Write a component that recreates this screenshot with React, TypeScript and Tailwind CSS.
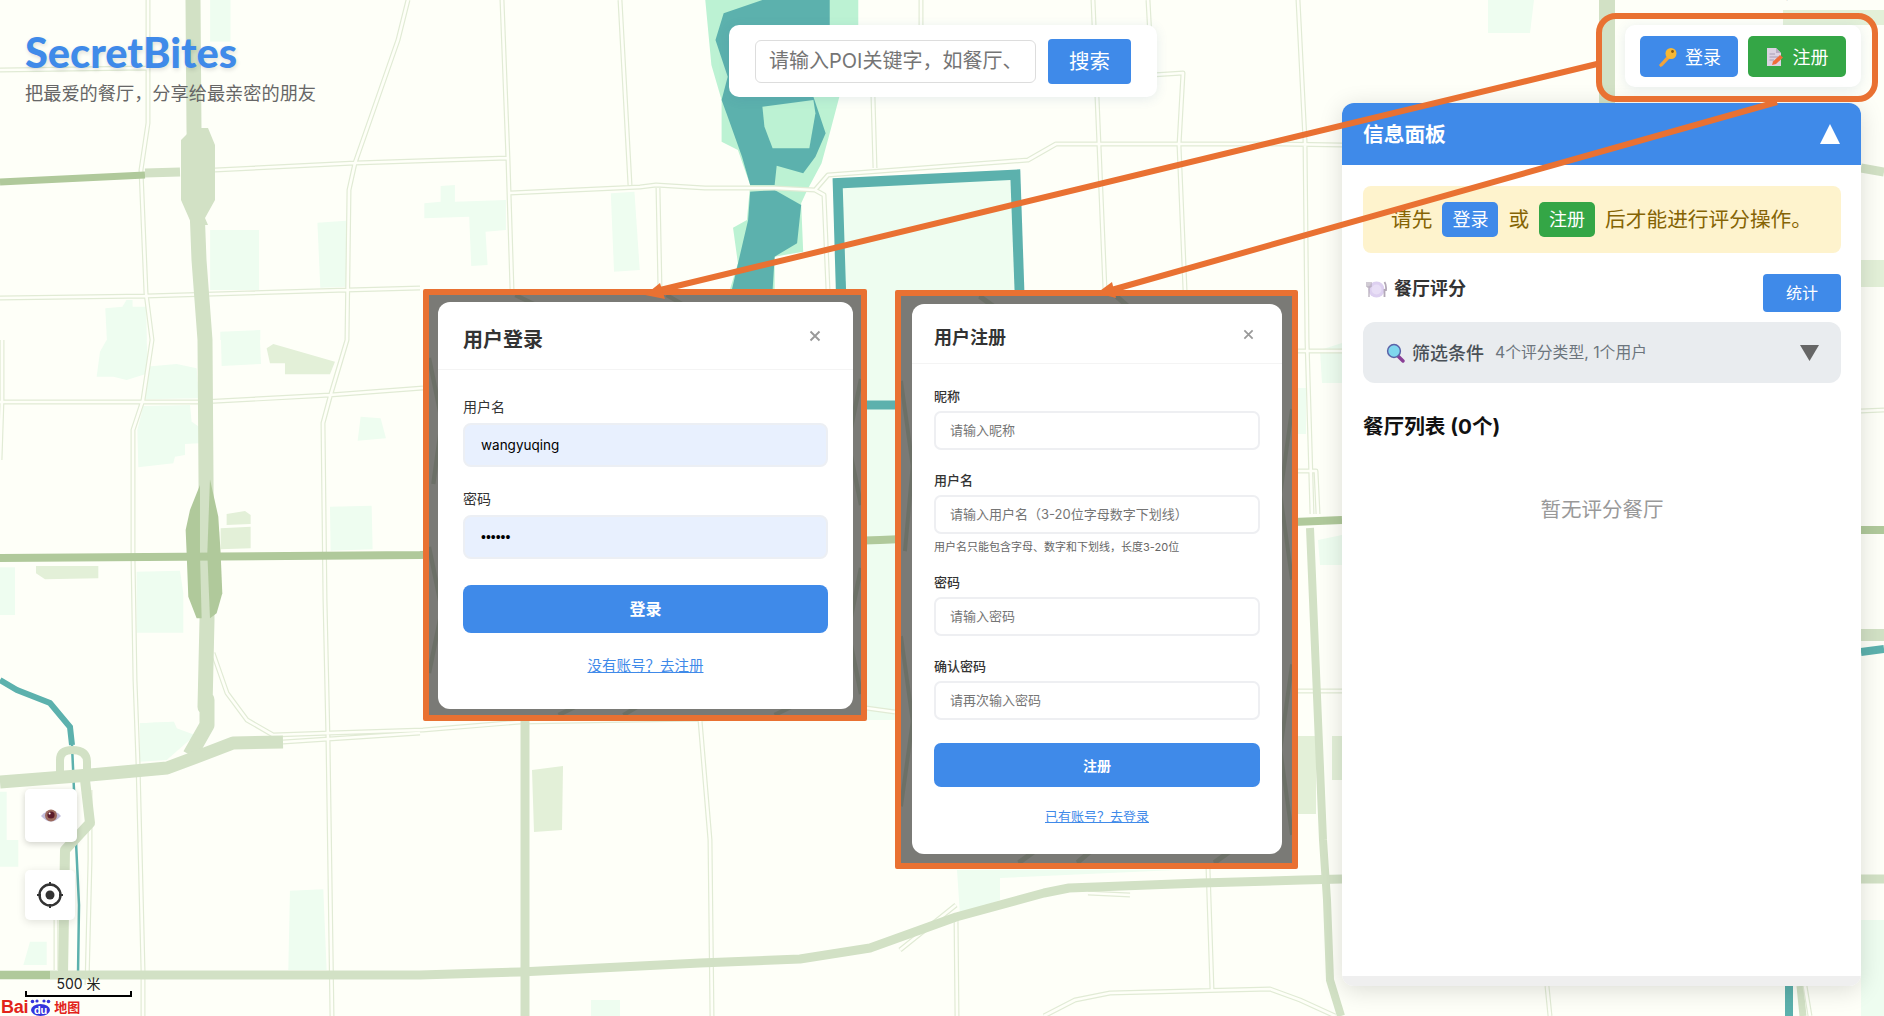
import type { ReactNode } from 'react';

const minorRoads = [
  'M148 0L148 123L141 170L146 293L152 340L143 400L133 430L133 557L135 680L138 763L143 970L143 1016',
  'M408 0L398 40L355 163L349 190L347 340L330 397L323 423L325 600L328 740L332 1016',
  'M502 0L508 160L512 290L511 340',
  'M620 0L630 185',
  'M0 70L147 68',
  'M0 298L146 296L347 290L420 288',
  'M0 402L133 402L200 402L330 395L423 388',
  'M215 170L355 163L507 158',
  'M510 193L640 187L656 185L705 188L775 188L815 190L824 195L828 290',
  'M815 190L828 175L1028 160L1056 144L1280 144L1342 145',
  'M658 188L660 290',
  'M873 97L875 168',
  'M921 0L921 25',
  'M1093 0L1099 145L1105 290',
  'M1148 0L1152 75L1183 73L1179 145L1185 290',
  'M1298 0L1305 140L1307 340L1312 514',
  'M1298 351L1342 351',
  'M1298 471L1316 471L1318 514',
  'M1298 691L1342 691',
  'M1861 411L1884 410',
  'M2 340L2 400L0 460',
  'M213 653L227 693L247 720L273 735L330 733L423 730L520 722L700 719L866 712',
  'M283 742L420 733',
  'M700 720L710 840L712 1016',
  'M866 708L895 712',
  'M956 915L957 1016',
  'M1208 868L1212 990',
  'M1044 1016L1075 1000L1110 993L1270 989L1300 1000L1335 1016',
  'M1547 986L1550 1016',
  'M1805 986L1810 1016',
  'M90 790L90 860L87 985',
  'M56 970L56 900L70 890',
  'M900 950L956 905',
  'M1088 893L1130 895',
].join(' ');

function MapBackdrop() {
  return (
    <svg className="absolute inset-0" width="1884" height="1016" viewBox="0 0 1884 1016">
      <rect width="1884" height="1016" fill="#fefff8" />

      {/* parks, pale */}
      <g fill="#eefdf0">
        <g transform="scale(0.408 0.3333)">
          <path d="M515 0H565V125H515Z" />
          <path d="M515 690H635V870H515Z" />
          <path d="M778 668L848 662L850 860L785 863Z" />
          <path d="M1040 610L1080 605V558L1115 555V605L1240 600V690L1190 695L1195 795L1155 798L1150 650L1040 655Z" />
          <path d="M1497 580L1555 575L1568 810L1505 815Z" />
          <path d="M258 925L300 920L310 900H325V920L358 920L360 1020H262Z" />
          <path d="M540 995L638 990V1020H540Z" />
        </g>
        <g transform="translate(0 340) scale(0.3333)">
          <path d="M300 35L320 0H440L445 100L380 120L340 110H290Z" />
          <path d="M437 80L530 72L590 85L597 175L435 178Z" />
          <path d="M430 198L570 195L575 245L597 260V310L555 312V345L525 350L520 370L415 382L412 270Z" />
          <path d="M663 0H780L783 72L665 78Z" />
          <path d="M410 695L540 692L550 760V878H410Z" />
          <path d="M0 682H45V825H0Z" />
          <path d="M990 500L1115 497L1118 628L992 632Z" />
          <path d="M1082 230L1142 235L1158 295L1073 302Z" />
          <path d="M420 1150L522 1145L530 1165L585 1185L580 1200H420Z" />
        </g>
        <g transform="translate(0 680) scale(0.3333)">
          <path d="M420 130L520 125L540 165L580 170L500 240L420 245Z" />
          <path d="M0 335H20V480H55V560H0Z" />
          <path d="M870 632L970 628L980 870L865 870Z" />
          <path d="M90 785H140V855H70Z" />
        </g>
        <path d="M591 1000H620V1016H591Z" />
        <path d="M840 190H1020V720H840Z" />
        <path d="M1298 388H1306V434H1298Z" />
        <path d="M1320 350L1342 343V383H1322Z" />
        <path d="M1318 540L1342 535V565H1320Z" />
        <path d="M1488 0H1534L1530 33H1488Z" />
        <path d="M957 870H1176L1000 878V900L960 915Z" />
        <path d="M1861 920H1884V1057H1861Z" />
      </g>

      {/* parks, darker */}
      <g fill="#e3f0d8">
        <g transform="translate(0 340) scale(0.3333)">
          <path d="M800 25L820 12L1005 65L990 103H855V70H810Z" />
          <path d="M680 522L735 513L752 525V552L680 555Z" />
          <path d="M662 565L752 560V625L662 628Z" />
          <path d="M108 678H295V715L135 718L108 700Z" />
        </g>
        <path d="M532 770L563 766L562 830L534 832Z" />
        <path d="M1297 736H1316V814H1297Z" />
        <path d="M1332 736H1342V780H1332Z" />
        <path d="M1861 260H1884V287H1861Z" />
        <path d="M1783 10H1884V25H1783Z" />
      </g>

      {/* lake, top */}
      <g transform="translate(640 0) scale(0.408 0.3333)">
        <path
          fill="#bcf2d3"
          d="M160 0H535V75L465 400L445 490L410 570L395 610L400 755L330 770V870H220L240 790L228 683L262 660L270 555L240 450L200 425L200 300L175 195Z"
        />
        <path
          fill="#5cb1ad"
          d="M300 0H465V100L425 290L455 400L430 470L400 520L335 497L330 555H270L250 470L215 350L200 300L215 230L185 120L205 40Z"
        />
        <path fill="#bcf2d3" d="M300 320L425 300L430 340L415 445H325L305 380Z" />
        <path fill="#5cb1ad" d="M270 575L330 570L395 615L385 730L330 770L325 870H225L265 660Z" />
        <path fill="#5cb1ad" d="M472 535L932 508L942 870L480 870Z" />
        <path fill="#eefdf0" d="M497 565L908 540L918 870L505 870Z" />
      </g>
      <path d="M840 405H1020" stroke="#5cb1ad" strokeWidth="9" fill="none" />

      {/* rivers */}
      <path d="M0 680L17 690L50 703L70 727L72 745" fill="none" stroke="#5cb1ad" strokeWidth="6" />
      <path d="M72 745L74 790L76 842L79 905L78 975" fill="none" stroke="#5cb1ad" strokeWidth="2.5" />
      <path d="M1861 652L1884 649" fill="none" stroke="#5cb1ad" strokeWidth="8" />
      <path d="M1789 986V1016" fill="none" stroke="#5cb1ad" strokeWidth="8" />
      <path d="M1800 986L1803 1016" fill="none" stroke="#d2e1c5" strokeWidth="7" />

      {/* minor roads: outline, then the inside */}
      <g fill="none" strokeLinejoin="round">
        <path d={minorRoads} stroke="#e1ebd5" strokeWidth="5" />
        <path d={minorRoads} stroke="#fefff8" strokeWidth="2.6" />
      </g>

      {/* main roads */}
      <g fill="none" stroke="#d2e1c5" strokeLinejoin="round">
        <path d="M193 0L194 130L199 260L205 340L206 480L207 620L205 707L207 700L207 725L190 755" strokeWidth="15" />
        <path d="M0 782L90 775L167 768L207 753L233 743L283 742" strokeWidth="13" />
        <path d="M85 780L90 823L65 850L63 975" strokeWidth="10" />
        <path d="M60 775V760Q60 750 72 750Q87 750 87 762V780" strokeWidth="8" />
        <path d="M0 975L420 975L520 972L700 963L800 959L870 948L920 930L956 917L1044 893L1069 888L1201 883L1302 880L1342 879" strokeWidth="9" />
        <path d="M1861 879H1884" strokeWidth="9" />
        <path d="M525 720V1016" strokeWidth="9" />
        <path d="M1310 528L1323 840L1327 900L1330 980L1341 1016" strokeWidth="8" />
        <path d="M1607 0V103" strokeWidth="16" />
        <path d="M145 173L180 172" strokeWidth="9" />
        <path d="M1861 168L1884 172" strokeWidth="9" />
        <path d="M1861 635H1884" strokeWidth="12" />
      </g>
      <path fill="#d2e1c5" d="M193 128H208L215 145V200L205 218L208 225H192L181 200V140Z" />

      {/* dark roads */}
      <g fill="none" stroke="#b0c99b">
        <path d="M0 182L145 175" strokeWidth="7" />
        <path d="M0 558L420 555L880 540L1342 520" strokeWidth="8" />
        <path d="M1861 530H1884" strokeWidth="8" />
        <path d="M0 975H50" strokeWidth="8" />
      </g>
      <g fill="#b0c99b" transform="translate(0 340) scale(0.3333)">
        <path d="M600 435L570 510L557 570L560 640L565 770L590 835H605L600 640Z" />
        <path d="M630 418L655 530L662 640L667 760L650 820L630 835L622 640Z" />
      </g>
    </svg>
  );
}

function DimFrame({ className, children }: { className: string; children: ReactNode }) {
  return (
    <div className={`absolute overflow-hidden rounded-[2px] border-[6px] border-[#e97132] bg-[#7a7a76] ${className}`}>
      <svg className="absolute inset-0 h-full w-full opacity-30" preserveAspectRatio="none" viewBox="0 0 100 100">
        <path
          d="M0 15L3 30L1 45M0 60L3 75L0 90M20 0L26 3M55 0L60 3M80 100L86 97M30 100L36 97M100 20L97 35L100 50M100 65L97 80L100 95M45 100L50 97"
          stroke="#4f5a47"
          strokeWidth="1"
          fill="none"
        />
      </svg>
      {children}
    </div>
  );
}

function CloseIcon({ size }: { size: number }) {
  return (
    <svg width={size} height={size} viewBox="0 0 12 12" fill="none" stroke="#999" strokeWidth="1.9">
      <path d="M1.5 1.5L10.5 10.5M10.5 1.5L1.5 10.5" />
    </svg>
  );
}

function LoginModal() {
  return (
    <DimFrame className="left-[423px] top-[289px] h-[432px] w-[444px]">
      <div className="relative ml-[9px] mt-[7px] h-[407px] w-[415px] rounded-[12px] bg-white">
        <div className="flex h-[68px] items-center justify-between border-b border-[#f4f4f4] pl-[25px] pr-[32px]">
          <h2 className="pt-[8px] text-[20px] font-bold text-[#333]">用户登录</h2>
          <CloseIcon size={12} />
        </div>
        <div className="px-[25px] pt-[27px]">
          <label className="mb-[6px] block text-[14px] leading-[20px] text-[#333]">用户名</label>
          <input
            readOnly
            defaultValue="wangyuqing"
            className="h-[44px] w-full rounded-[8px] border-2 border-[#eceff4] bg-[#e8f0fe] px-[16px] pb-[1px] text-[13.5px] text-black outline-none"
          />
          <label className="mb-[6px] mt-[22px] block text-[14px] leading-[20px] text-[#333]">密码</label>
          <input
            readOnly
            type="password"
            defaultValue="123456"
            className="h-[44px] w-full rounded-[8px] border-2 border-[#eceff4] bg-[#e8f0fe] px-[16px] font-['Liberation_Sans',sans-serif] text-[14px] text-black outline-none"
          />
          <button className="mt-[26px] h-[48px] w-full rounded-[8px] bg-[#3f8ae9] text-[16px] font-semibold text-white">
            登录
          </button>
          <div className="mt-[23px] text-center text-[14.5px] leading-[20px]">
            <a className="text-[#3f8ae9] underline">没有账号？去注册</a>
          </div>
        </div>
      </div>
    </DimFrame>
  );
}

function RegField({ label, placeholder, className }: { label: string; placeholder: string; className?: string }) {
  return (
    <div className={className}>
      <label className="mb-[6px] block text-[13px] font-medium leading-[18px] text-[#333]">{label}</label>
      <input
        readOnly
        placeholder={placeholder}
        className="h-[39px] w-full rounded-[7px] border-2 border-[#eeeff2] bg-white px-[14px] pb-[1px] text-[13px] outline-none placeholder:text-[#757575]"
      />
    </div>
  );
}

function RegisterModal() {
  return (
    <DimFrame className="left-[895px] top-[290px] h-[579px] w-[403px]">
      <div className="relative ml-[11px] mt-[8px] h-[550px] w-[370px] rounded-[12px] bg-white">
        <div className="flex h-[60px] items-center justify-between border-b border-[#f4f4f4] pl-[22px] pr-[28px]">
          <h2 className="pt-[7px] text-[18px] font-bold text-[#333]">用户注册</h2>
          <div className="pt-[2px]">
            <CloseIcon size={11} />
          </div>
        </div>
        <div className="px-[22px] pt-[23px]">
          <RegField label="昵称" placeholder="请输入昵称" />
          <RegField className="mt-[21px]" label="用户名" placeholder="请输入用户名（3-20位字母数字下划线）" />
          <p className="mt-[6px] text-[11px] leading-[14px] text-[#666]">用户名只能包含字母、数字和下划线，长度3-20位</p>
          <RegField className="mt-[19px]" label="密码" placeholder="请输入密码" />
          <RegField className="mt-[21px]" label="确认密码" placeholder="请再次输入密码" />
          <button className="mt-[23px] h-[44px] w-full rounded-[7px] bg-[#3f8ae9] text-[14px] font-semibold text-white">
            注册
          </button>
          <div className="mt-[20px] text-center text-[13px] leading-[18px]">
            <a className="text-[#3f8ae9] underline">已有账号？去登录</a>
          </div>
        </div>
      </div>
    </DimFrame>
  );
}

function KeyIcon() {
  return (
    <svg width="20" height="21" viewBox="0 0 20 21">
      <path d="M11 8L2 18L3.5 20L5.5 19L13.5 10.5Z" fill="#f2a33a" />
      <circle cx="14" cy="6.5" r="5.5" fill="#f7b733" />
      <circle cx="15.5" cy="4.5" r="1.4" fill="#8a5a12" />
    </svg>
  );
}

function MemoIcon() {
  return (
    <svg width="18" height="20" viewBox="0 0 18 20">
      <path d="M1 1H10L15 6V19H1Z" fill="#dcd3e2" />
      <path d="M10 1L15 6H10Z" fill="#b9adc4" />
      <path d="M3.5 7H9M3.5 10H12M3.5 13H8" stroke="#a99cb4" strokeWidth="1" />
      <path d="M6 18L7 14.5L14 8L17 10.5L10 17Z" fill="#ef6c3a" />
    </svg>
  );
}

function PlateIcon() {
  return (
    <svg width="21" height="17" viewBox="0 0 21 17">
      <circle cx="10.5" cy="8.5" r="8" fill="#ddd0f0" />
      <circle cx="10.5" cy="8.5" r="5" fill="#e8def6" />
      <path d="M1 1V6M3 1V6M5 1V6M1 6H5M3 6V16" stroke="#b3a9b8" strokeWidth="1.2" fill="none" />
      <path d="M18.5 1Q20.5 4 20 9H18.5V16" stroke="#b3a9b8" strokeWidth="1.8" fill="none" />
    </svg>
  );
}

function SearchEmoji() {
  return (
    <svg width="19" height="20" viewBox="0 0 19 20">
      <path d="M12 13L17 18" stroke="#8a3f96" strokeWidth="3.4" strokeLinecap="round" />
      <circle cx="8" cy="8" r="6.4" fill="#7fd6ee" stroke="#5a62a8" strokeWidth="1.5" />
    </svg>
  );
}

function InfoPanel() {
  return (
    <aside className="absolute left-[1342px] top-[103px] flex h-[883px] w-[519px] flex-col overflow-hidden rounded-[12px] bg-white shadow-[0_4px_24px_rgba(0,0,0,0.14)]">
      <div className="flex h-[62px] shrink-0 items-center justify-between bg-[#3f8ae9] pl-[21px] pr-[21px]">
        <h3 className="pt-[2px] text-[20.7px] font-bold text-white">信息面板</h3>
        <svg width="20" height="20" viewBox="0 0 20 20">
          <path d="M10 0L20 20H0Z" fill="#fff" />
        </svg>
      </div>
      <div className="flex flex-1 flex-col pl-[21px] pr-[20px] pt-[21px]">
        <div className="flex h-[67px] items-center justify-center gap-[10px] rounded-[8px] bg-[#fef3cd] pr-[1px] text-[20.7px] text-[#856404]">
          <span>请先</span>
          <span className="flex h-[35px] w-[56px] items-center justify-center rounded-[5px] bg-[#3f8ae9] text-[18px] text-white">登录</span>
          <span>或</span>
          <span className="flex h-[35px] w-[56px] items-center justify-center rounded-[5px] bg-[#34a646] text-[18px] text-white">注册</span>
          <span>后才能进行评分操作。</span>
        </div>
        <div className="mt-[21px] flex items-start justify-between">
          <div className="flex items-center gap-[7px] pl-[3px] pt-[2px] text-[18px] font-semibold leading-[26px] text-[#333]">
            <PlateIcon />
            <span>餐厅评分</span>
          </div>
          <button className="h-[38px] w-[78px] rounded-[4px] bg-[#3f8ae9] text-[16px] text-white">统计</button>
        </div>
        <div className="mt-[10px] flex h-[61px] items-center justify-between rounded-[12px] bg-[#e9ecef] pl-[23px] pr-[22px]">
          <div className="flex items-center pt-[1px]">
            <SearchEmoji />
            <span className="ml-[7px] text-[18px] font-medium text-[#495057]">筛选条件</span>
            <span className="ml-[11px] text-[15.8px] text-[#6c757d]">4个评分类型, 1个用户</span>
          </div>
          <svg width="19" height="16" viewBox="0 0 19 16">
            <path d="M0 0H19L9.5 16Z" fill="#666" />
          </svg>
        </div>
        <h4 className="mt-[29px] text-[20.6px] font-bold leading-[30px] text-[#111]">餐厅列表 (0个)</h4>
        <p className="mt-[53px] text-center text-[20.5px] leading-[30px] text-[#999]">暂无评分餐厅</p>
      </div>
      <div className="h-[10px] shrink-0 bg-[#efefef]" />
    </aside>
  );
}

export default function App() {
  return (
    <div className="relative h-[1016px] w-full overflow-hidden bg-[#fefff8] font-['Inter','Noto_Sans_CJK_SC',sans-serif]">
      <MapBackdrop />

      <div className="absolute right-[4px] top-[-17px] text-[14px] leading-[20px] text-[#9aa39a]">北京工人体育场</div>

      {/* Brand */}
      <div className="absolute left-[25px] top-[27px]">
        <h1 className="font-['Lato','Noto_Sans_CJK_SC',sans-serif] text-[41.5px] font-black leading-[50px] text-[#3f8ae9] [text-shadow:1px_2px_4px_rgba(0,0,0,0.12)]">
          SecretBites
        </h1>
        <p className="mt-[3px] text-[18.2px] leading-[26px] text-[#666]">把最爱的餐厅，分享给最亲密的朋友</p>
      </div>

      {/* Search */}
      <div className="absolute left-[729px] top-[25px] flex h-[72px] w-[428px] items-center gap-[12px] rounded-[10px] bg-white pl-[26px] shadow-[0_2px_12px_rgba(60,100,160,0.12)]">
        <input
          readOnly
          placeholder="请输入POI关键字，如餐厅、酒店"
          className="h-[43px] w-[281px] rounded-[6px] border border-[#ddd] bg-white px-[13px] text-[20px] outline-none placeholder:text-[#757575]"
        />
        <button className="h-[45px] w-[83px] rounded-[4px] bg-[#3f8ae9] pt-[3px] text-[20.5px] text-white">搜索</button>
      </div>

      {/* Auth buttons */}
      <div className="absolute left-[1625px] top-[25px] flex h-[62px] w-[236px] items-center gap-[10px] rounded-[10px] bg-white pl-[15px] shadow-[0_2px_12px_rgba(60,100,160,0.12)]">
        <button className="flex h-[41px] w-[98px] items-center justify-center gap-[8px] rounded-[5px] bg-[#3f8ae9] pt-[2px] text-[18px] text-white">
          <KeyIcon />
          登录
        </button>
        <button className="flex h-[41px] w-[98px] items-center justify-center gap-[9px] rounded-[5px] bg-[#34a646] pt-[2px] text-[18px] text-white">
          <MemoIcon />
          注册
        </button>
      </div>

      <InfoPanel />

      {/* Map tools */}
      <button className="absolute left-[25px] top-[789px] flex h-[53px] w-[52px] items-center justify-center rounded-[5px] bg-white shadow-[0_2px_6px_rgba(0,0,0,0.18)]">
        <svg width="22" height="16" viewBox="0 0 22 16">
          <path d="M1 8Q11 -3 21 8Q11 19 1 8Z" fill="#c3bfdc" />
          <circle cx="11" cy="7.5" r="6" fill="#9c6a5e" />
          <circle cx="11" cy="7" r="3.6" fill="#5b1a2a" />
          <circle cx="9.6" cy="5.4" r="1" fill="#fff" />
        </svg>
      </button>
      <button className="absolute left-[25px] top-[870px] flex h-[50px] w-[50px] items-center justify-center rounded-[5px] bg-white shadow-[0_2px_8px_rgba(0,0,0,0.12)]">
        <svg width="26" height="26" viewBox="0 0 26 26" fill="none" stroke="#333">
          <circle cx="13" cy="13" r="10.5" strokeWidth="2.4" />
          <circle cx="13" cy="13" r="4.5" fill="#333" stroke="none" />
          <path d="M13 0V4M13 22V26M0 13H4M22 13H26" strokeWidth="2" />
        </svg>
      </button>

      {/* Scale and logo */}
      <div className="absolute left-[25px] top-[975px] w-[107px]">
        <div className="text-center text-[14px] leading-[17px] text-[#222]">500 米</div>
        <div className="mt-[-1px] h-[6px] border-x-2 border-b-2 border-black" />
      </div>
      <div className="absolute bottom-0 left-[1px] flex h-[17px] items-center font-['Liberation_Sans','Noto_Sans_CJK_SC',sans-serif]">
        <span className="text-[18px] font-bold leading-[17px] tracking-[-0.3px] text-[#e2231a]">Bai</span>
        <span className="relative ml-[2px] flex h-[17px] w-[21px] items-center justify-center text-[11px] font-bold leading-none text-white">
          <svg className="absolute inset-0" width="21" height="17" viewBox="0 0 21 17">
            <ellipse cx="10.5" cy="11" rx="9.5" ry="6" fill="#3333dd" />
            <circle cx="2.5" cy="2.5" r="1.8" fill="#3333dd" />
            <circle cx="18.5" cy="2.5" r="1.8" fill="#3333dd" />
            <circle cx="7" cy="2" r="1.6" fill="#3333dd" />
            <circle cx="14" cy="2" r="1.6" fill="#3333dd" />
          </svg>
          <span className="relative pt-[5px]">du</span>
        </span>
        <span className="ml-[3px] text-[13px] font-bold leading-[17px] text-[#e2231a]">地图</span>
      </div>

      <LoginModal />
      <RegisterModal />

      {/* Callouts */}
      <div className="absolute left-[1596px] top-[13px] h-[89px] w-[282px] rounded-[20px] border-[6px] border-[#e97132]" />
      <svg className="pointer-events-none absolute inset-0" width="1884" height="1016" viewBox="0 0 1884 1016">
        <path d="M1597 64L656 291M1777 102L1108 291" stroke="#e97132" strokeWidth="6" fill="none" />
        <path d="M645 295L660 283L665 299Z M1097 293L1112 282L1116 298Z" fill="#e97132" />
      </svg>
    </div>
  );
}
